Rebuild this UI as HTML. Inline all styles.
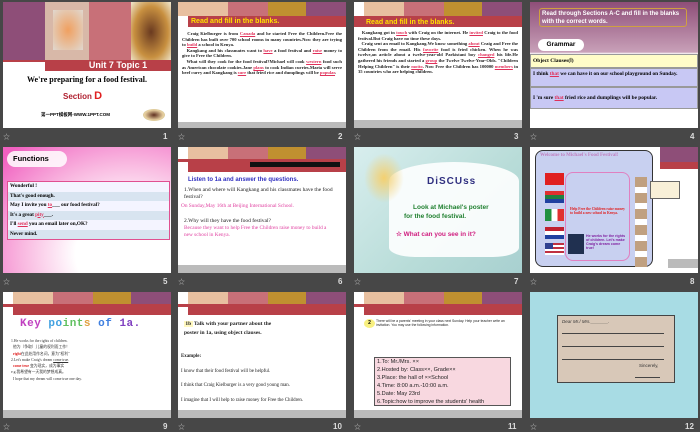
<!DOCTYPE html><html><head><meta charset="utf-8"><style>
*{margin:0;padding:0;box-sizing:border-box}
body{width:700px;height:431px;background:#474747;position:relative;overflow:hidden;font-family:"Liberation Serif","Noto Serif CJK SC",serif}
.s{position:absolute;width:168px;height:126px;background:#fff;overflow:hidden}
.n{position:absolute;color:#ddd;font:bold 8px "Liberation Sans",sans-serif}
.st{position:absolute;color:#bbb;font-size:7px}
.a{position:absolute}
.t{position:absolute;font-size:4.6px;line-height:5.6px;color:#222;text-align:justify;font-weight:bold}
.r{color:#e0305a;text-decoration:underline}
.hdr{position:absolute;left:0;top:0;width:168px;height:14px}
</style></head><body>
<!-- slide 1 -->
<div class="s" style="left:3px;top:2px">
<div class="a" style="left:0;top:0;width:42px;height:60px;background:#8e4e78"></div>
<div class="a" style="left:42px;top:0;width:44px;height:60px;background:#d8b8a8"></div>
<div class="a" style="left:50px;top:8px;width:30px;height:40px;background:radial-gradient(#f0a060,#e0d8d0)"></div>
<div class="a" style="left:86px;top:0;width:42px;height:60px;background:#c87078"></div>
<div class="a" style="left:128px;top:0;width:40px;height:60px;background:radial-gradient(#6a3a20,#c89040 60%,#f0e8d0)"></div>
<div class="a" style="left:0;top:58px;width:168px;height:2px;background:#b84048"></div>
<div class="a" style="left:42px;top:58px;width:126px;height:11px;background:#b84048;color:#fff;font:bold 9px 'Liberation Sans',sans-serif;text-align:center;padding-left:20px;line-height:11px">Unit 7 Topic 1</div>
<div class="a" style="left:0;top:73px;width:168px;text-align:center;font:bold 8px 'Liberation Serif',serif">We're preparing for a food festival.</div>
<div class="a" style="left:60px;top:88px;font:bold 8px 'Liberation Sans',sans-serif;color:#b02030">Section <span style="font-size:11px;color:#e02020">D</span></div>
<div class="a" style="left:38px;top:110px;font:bold 4.5px 'Liberation Sans','Noto Sans CJK SC',sans-serif">第一PPT模板网-WWW.1PPT.COM</div>
<div class="a" style="left:140px;top:107px;width:22px;height:12px;border-radius:50%;background:radial-gradient(#603020,#e8d0a0 60%,#aab080)"></div>
</div>
<div class="st" style="left:3px;top:132px">☆</div><div class="n" style="left:163px;top:132px">1</div>
<!-- slide 2 -->
<div class="s" style="left:178px;top:2px">
<div class="a" style="left:0;top:0;width:50px;height:14px;background:#e8c0a0"></div>
<div class="a" style="left:50px;top:0;width:40px;height:14px;background:#c87078"></div>
<div class="a" style="left:90px;top:0;width:38px;height:14px;background:#c09030"></div>
<div class="a" style="left:128px;top:0;width:40px;height:14px;background:#8e4e78"></div>
<div class="a" style="left:10px;top:14px;width:158px;height:11px;background:#b84048;color:#ffe000;font:bold 7px 'Liberation Sans',sans-serif;padding-left:3px;line-height:11px">Read and fill in the blanks.</div>
<div class="t" style="left:4px;top:29px;width:160px">&nbsp;&nbsp;&nbsp;Craig Kielburger is from <span class="r">Canada</span> and he started Free the Children.Free the Children has built over 700 school rooms in many countries.Now they are trying to <span class="r">build</span> a school in Kenya.<br>&nbsp;&nbsp;&nbsp;Kangkang and his classmates want to <span class="r">have</span> a food festival and <span class="r">raise</span> money to give to Free the Children.<br>&nbsp;&nbsp;&nbsp;What will they cook for the food festival?Michael will cook <span class="r">western</span> food such as American chocolate cookies.Jane <span class="r">plans</span> to cook Indian curries.Maria will serve beef curry and Kangkang is <span class="r">sure</span> that fried rice and dumplings will be <span class="r">popular</span>.</div>
<div class="a" style="left:0;top:120px;width:168px;height:6px;background:#bbb"></div>
</div>
<div class="st" style="left:178px;top:132px">☆</div><div class="n" style="left:338px;top:132px">2</div>
<!-- slide 3 -->
<div class="s" style="left:354px;top:2px">
<div class="a" style="left:10px;top:0;width:40px;height:14px;background:#e8c0a0"></div>
<div class="a" style="left:50px;top:0;width:40px;height:14px;background:#c87078"></div>
<div class="a" style="left:90px;top:0;width:38px;height:14px;background:#c09030"></div>
<div class="a" style="left:128px;top:0;width:40px;height:14px;background:#8e4e78"></div>
<div class="a" style="left:0;top:14px;width:168px;height:11px;background:#b84048;color:#ffe000;font:bold 7px 'Liberation Sans',sans-serif;padding-left:12px;line-height:13px">Read and fill in the blanks.</div>
<div class="t" style="left:4px;top:28px;width:160px">&nbsp;&nbsp;&nbsp;Kangkang got in <span class="r">touch</span> with Craig on the internet. He <span class="r">invited</span> Craig to the food festival.But Craig have no time these days.<br>&nbsp;&nbsp;&nbsp;Craig sent an email to Kangkang.We know something <span class="r">about</span> Craig and Free the Children from the email. His <span class="r">favorite</span> food is fried chicken. When he was twelve,an article about a twelve-year-old Parkistani boy <span class="r">changed</span> his life.He gathered his friends and started a <span class="r">group</span> the Twelve Twelve-Year-Olds. "Children Helping Children" is their <span class="r">motto</span>. Now Free the Children has 100000 <span class="r">members</span> in 35 countries who are helping children.</div>
<div class="a" style="left:0;top:118px;width:168px;height:8px;background:#bbb"></div>
</div>
<div class="st" style="left:354px;top:132px">☆</div><div class="n" style="left:514px;top:132px">3</div>
<!-- slide 4 -->
<div class="s" style="left:530px;top:2px;background:linear-gradient(#8e4e78,#c8a0b8 50px,#fff 52px)">
<div class="a" style="left:9px;top:6px;width:148px;height:19px;border:1px solid #d0a040;border-radius:3px;color:#fff;font:bold 6px 'Liberation Sans',sans-serif;padding:1px 2px;line-height:8px">Read through Sections A-C and fill in the blanks with the correct words.</div>
<div class="a" style="left:8px;top:37px;width:46px;height:12px;border-radius:6px;background:#fff;font:bold 6.5px 'Liberation Sans',sans-serif;text-align:center;line-height:12px">Grammar</div>
<div class="a" style="left:0;top:52px;width:168px;height:14px;background:#fffcc8;border:1px solid #999;font:bold 5.5px 'Liberation Serif';padding:3px 2px">Object Clauses(Ⅰ)</div>
<div class="a" style="left:0;top:66px;width:168px;height:19px;background:#c8c8f4;border:1px solid #999;font:bold 5.3px 'Liberation Serif';padding:2px 2px;line-height:7px">I think <span class="r">that</span> we can have it on our school playground on Sunday.</div>
<div class="a" style="left:0;top:85px;width:168px;height:22px;background:#c8c8f4;border:1px solid #999;font:bold 5.3px 'Liberation Serif';padding:7px 2px">I 'm sure <span class="r">that</span> fried rice and dumplings will be popular.</div>
</div>
<div class="st" style="left:530px;top:132px">☆</div><div class="n" style="left:690px;top:132px">4</div>
<!-- slide 5 -->
<div class="s" style="left:3px;top:147px;background:radial-gradient(ellipse at 75% 85%,#fff 30%,#f9b8e0 60%,#f060c0 95%)">
<div class="a" style="left:4px;top:4px;width:60px;height:16px;border-radius:8px;background:rgba(255,255,255,.85);font:bold 7.5px 'Liberation Sans',sans-serif;padding:3px 6px">Functions</div>
<div class="a" style="left:4px;top:34px;width:163px;border:1px solid #e05090;font:bold 5.2px 'Liberation Serif';line-height:9.5px">
<div style="background:#f4f4ff;padding-left:2px">Wonderful !</div><div style="background:#d8e4f0;padding-left:2px">That's good enough.</div><div style="background:#f4f4ff;padding-left:2px">May I invite you <span class="r">to</span>___ our food festival?</div><div style="background:#d8e4f0;padding-left:2px">It's a great <span class="r">pity</span>___.</div><div style="background:#f4f4ff;padding-left:2px">I'll <span class="r">send</span> you an email later on,OK?</div><div style="background:#d8e4f0;padding-left:2px">Never mind.</div></div>
</div>
<div class="st" style="left:3px;top:277px">☆</div><div class="n" style="left:163px;top:277px">5</div>
<!-- slide 6 -->
<div class="s" style="left:178px;top:147px">
<div class="a" style="left:10px;top:0;width:40px;height:12px;background:#e8c0a0"></div>
<div class="a" style="left:50px;top:0;width:40px;height:12px;background:#c87078"></div>
<div class="a" style="left:90px;top:0;width:38px;height:12px;background:#c09030"></div>
<div class="a" style="left:128px;top:0;width:40px;height:12px;background:#8e4e78"></div>
<div class="a" style="left:0;top:12px;width:168px;height:3px;background:#b84048"></div>
<div class="a" style="left:10px;top:15px;width:158px;height:10px;background:#b84048"></div>
<div class="a" style="left:72px;top:15px;width:90px;height:5px;background:#111"></div>
<div class="a" style="left:10px;top:30px;font:bold 6px 'Liberation Sans';color:#3030c0">Listen to 1a and answer the questions.</div>
<div class="a" style="left:6px;top:40px;width:158px;font:5.5px 'Liberation Serif';line-height:7px;color:#222">1.When and where will Kangkang and his classmates have the food festival?</div>
<div class="a" style="left:3px;top:56px;font:5.3px 'Liberation Serif';color:#e040a0">On Sunday,May 16th at Beijing International School.</div>
<div class="a" style="left:6px;top:71px;font:5.5px 'Liberation Serif';color:#222">2.Why will they have the food festival?</div>
<div class="a" style="left:6px;top:78px;width:150px;font:5.3px 'Liberation Serif';line-height:7px;color:#e040a0">Because they want to help Free the Children raise money to build a new school in Kenya.</div>
<div class="a" style="left:0;top:118px;width:168px;height:8px;background:#bbb"></div>
</div>
<div class="st" style="left:178px;top:277px">☆</div><div class="n" style="left:338px;top:277px">6</div>
<!-- slide 7 -->
<div class="s" style="left:354px;top:147px;background:linear-gradient(135deg,#d8eeee,#b8dcd8 60%,#a8d0d0)">
<div class="a" style="left:35px;top:15px;width:130px;height:95px;background:#fbfdfd;border-radius:50% 50% 20% 20%/20% 20% 10% 10%;opacity:.95"></div>
<div class="a" style="left:10px;top:6px;width:40px;height:50px;background:radial-gradient(#f4d070,rgba(240,200,100,0) 70%)"></div>
<div class="a" style="left:73px;top:29px;font:bold 10px 'Liberation Sans';color:#303080;letter-spacing:1px">DiSCUss</div>
<div class="a" style="left:50px;top:57px;font:bold 6.5px 'Liberation Sans';color:#208030;line-height:8.5px">&nbsp;&nbsp;&nbsp;&nbsp;&nbsp;Look at Michael's poster<br>for the food festival.</div>
<div class="a" style="left:42px;top:83px;font:bold 6.5px 'Liberation Sans';color:#d02080">☆ What can you see in it?</div>
</div>
<div class="st" style="left:354px;top:277px">☆</div><div class="n" style="left:514px;top:277px">7</div>
<!-- slide 8 -->
<div class="s" style="left:530px;top:147px">
<div class="a" style="left:130px;top:0;width:38px;height:22px;background:#8e4e78"></div>
<div class="a" style="left:130px;top:15px;width:38px;height:7px;background:#b84048"></div>
<div class="a" style="left:5px;top:3px;width:118px;height:117px;background:#c8d0f0;border:1px solid #333;border-radius:8px"></div>
<div class="a" style="left:10px;top:6px;font:bold 5px 'Liberation Serif';color:#c080c0">Welcome to Michael's Food Festival!</div>
<div class="a" style="left:35px;top:25px;width:65px;height:89px;background:#c8d0f0;border:1px solid #e080c0;border-radius:8px"></div>
<div class="a" style="left:15px;top:26px;width:19px;height:12px;background:#e02020"></div>
<div class="a" style="left:15px;top:44px;width:19px;height:12px;background:linear-gradient(#e03030 33%,#208040 33% 66%,#2040a0 66%)"></div>
<div class="a" style="left:15px;top:62px;width:19px;height:12px;background:linear-gradient(90deg,#209040 33%,#fff 33% 66%,#e03030 66%)"></div>
<div class="a" style="left:15px;top:80px;width:19px;height:12px;background:linear-gradient(#c02030 33%,#fff 33% 66%,#2040a0 66%)"></div>
<div class="a" style="left:15px;top:96px;width:19px;height:12px;background:repeating-linear-gradient(#c03040 0 2px,#fff 2px 4px)"></div>
<div class="a" style="left:15px;top:96px;width:8px;height:6px;background:#304090"></div>
<div class="a" style="left:40px;top:60px;width:55px;font:bold 3.6px 'Liberation Serif';color:#e02020">Help Free the Children raise money to build a new school in Kenya.</div>
<div class="a" style="left:38px;top:87px;width:16px;height:20px;background:#203050"></div>
<div class="a" style="left:56px;top:87px;width:42px;font:bold 3.6px 'Liberation Sans';color:#8020a0">He works for the rights of children. Let's make Craig's dream come true!</div>
<div class="a" style="left:105px;top:30px;width:12px;height:90px;background:repeating-linear-gradient(#c0a080 0 10px,#fff 10px 16px)"></div>
<div class="a" style="left:120px;top:34px;width:30px;height:18px;background:#f8f0d8;border:1px solid #666"></div>
<div class="a" style="left:138px;top:112px;width:30px;height:9px;background:#bbb"></div>
</div>
<div class="st" style="left:530px;top:277px">☆</div><div class="n" style="left:690px;top:277px">8</div>
<!-- slide 9 -->
<div class="s" style="left:3px;top:292px">
<div class="a" style="left:10px;top:0;width:40px;height:12px;background:#e8c0a0"></div>
<div class="a" style="left:50px;top:0;width:40px;height:12px;background:#c87078"></div>
<div class="a" style="left:90px;top:0;width:38px;height:12px;background:#c09030"></div>
<div class="a" style="left:128px;top:0;width:40px;height:12px;background:#8e4e78"></div>
<div class="a" style="left:0;top:12px;width:168px;height:3px;background:#b84048"></div>
<div class="a" style="left:10px;top:15px;width:158px;height:8px;background:#b84048"></div>
<div class="a" style="left:17px;top:26px;font:bold 11px 'Liberation Mono';letter-spacing:0.5px"><span style="color:#c040c0">Key </span><span style="color:#40a0e0">po</span><span style="color:#60c060">int</span><span style="color:#e0a040">s </span><span style="color:#4080e0">of </span><span style="color:#8040c0">1a.</span></div>
<div class="a" style="left:8px;top:46px;width:155px;font:3.8px 'Liberation Serif','Noto Sans CJK SC';line-height:6.3px;color:#333">1.He works for the rights of children.<br>&nbsp;&nbsp;他为（争取）儿童的权利而工作！<br>&nbsp;&nbsp;<b style="color:#e02020">right</b>在此处用作名词，意为"权利"<br>2.Let's make Craig's dream <u>come true</u>.<br>&nbsp;&nbsp;<b style="color:#e02020">come true</b> 变为现实，成为事实<br>e.g.我希望有一天我的梦想成真。<br>&nbsp;&nbsp;I hope that my dream will come true one day.</div>
<div class="a" style="left:0;top:118px;width:168px;height:8px;background:#bbb"></div>
</div>
<div class="st" style="left:3px;top:422px">☆</div><div class="n" style="left:163px;top:422px">9</div>
<!-- slide 10 -->
<div class="s" style="left:178px;top:292px">
<div class="a" style="left:10px;top:0;width:40px;height:12px;background:#e8c0a0"></div>
<div class="a" style="left:50px;top:0;width:40px;height:12px;background:#c87078"></div>
<div class="a" style="left:90px;top:0;width:38px;height:12px;background:#c09030"></div>
<div class="a" style="left:128px;top:0;width:40px;height:12px;background:#8e4e78"></div>
<div class="a" style="left:0;top:12px;width:168px;height:3px;background:#b84048"></div>
<div class="a" style="left:10px;top:15px;width:158px;height:8px;background:#b84048"></div>
<div class="a" style="left:6px;top:28px;font:bold 5.5px 'Liberation Serif';line-height:9px;color:#222"><span style="background:#fff8c0">&nbsp;1b&nbsp;</span> Talk with your partner about the<br>poster in 1a, using object clauses.</div>
<div class="a" style="left:3px;top:58px;width:164px;font:4.9px 'Liberation Serif';line-height:14.5px;color:#222"><b>Example:</b><br>I know that their food festival will be helpful.<br>I think that Craig Kielburger is a very good young man.<br>I imagine that I will help to raise money for Free the Children.</div>
<div class="a" style="left:0;top:118px;width:168px;height:8px;background:#bbb"></div>
</div>
<div class="st" style="left:178px;top:422px">☆</div><div class="n" style="left:333px;top:422px">10</div>
<!-- slide 11 -->
<div class="s" style="left:354px;top:292px">
<div class="a" style="left:10px;top:0;width:40px;height:12px;background:#e8c0a0"></div>
<div class="a" style="left:50px;top:0;width:40px;height:12px;background:#c87078"></div>
<div class="a" style="left:90px;top:0;width:38px;height:12px;background:#c09030"></div>
<div class="a" style="left:128px;top:0;width:40px;height:12px;background:#8e4e78"></div>
<div class="a" style="left:0;top:12px;width:168px;height:3px;background:#b84048"></div>
<div class="a" style="left:10px;top:15px;width:158px;height:8px;background:#b84048"></div>
<div class="a" style="left:10px;top:27px;width:11px;height:9px;border-radius:50%;background:#f8f080;font:bold 5px 'Liberation Sans';text-align:center;line-height:9px">2</div>
<div class="a" style="left:22px;top:27px;width:143px;font:3.4px 'Liberation Sans';line-height:4.3px;color:#222">There will be a parents' meeting in your class next Sunday. Help your teacher write an invitation. You may use the following information.</div>
<div class="a" style="left:20px;top:65px;width:137px;height:49px;background:#f8d8e0;border:1px solid #555;font:5.6px 'Liberation Sans','Noto Sans CJK SC';line-height:8px;padding-left:2px;color:#222">1.To: Mr./Mrs. ××<br>2.Hosted by: Class××, Grade××<br>3.Place: the hall of ××School<br>4.Time: 8:00 a.m.-10:00 a.m.<br>5.Date: May 23rd<br>6.Topic:how to improve the students' health</div>
<div class="a" style="left:0;top:118px;width:168px;height:8px;background:#bbb"></div>
</div>
<div class="st" style="left:354px;top:422px">☆</div><div class="n" style="left:508px;top:422px">11</div>
<!-- slide 12 -->
<div class="s" style="left:530px;top:292px;background:#a8dce4">
<div class="a" style="left:27px;top:23px;width:118px;height:68px;background:#d8c8b8;border:1px solid #444"></div>
<div class="a" style="left:32px;top:27px;font:italic 4.5px 'Liberation Sans';color:#333">Dear Mr./ Mrs._______.</div>
<div class="a" style="left:32px;top:41px;width:102px;height:1px;background:#444"></div>
<div class="a" style="left:32px;top:54px;width:102px;height:1px;background:#444"></div>
<div class="a" style="left:32px;top:67px;width:102px;height:1px;background:#444"></div>
<div class="a" style="left:109px;top:71px;font:4.5px 'Liberation Sans';color:#333">Sincerely,</div>
<div class="a" style="left:105px;top:85px;width:25px;height:1px;background:#444"></div>
</div>
<div class="st" style="left:530px;top:422px">☆</div><div class="n" style="left:685px;top:422px">12</div>
</body></html>
